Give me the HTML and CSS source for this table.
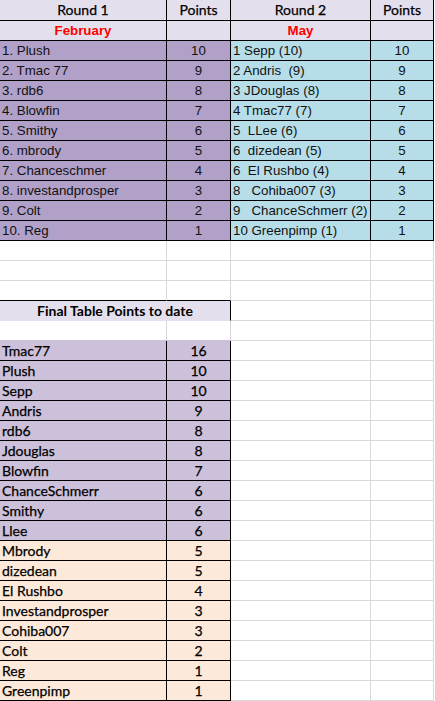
FILE: index.html
```html
<!DOCTYPE html>
<html>
<head>
<meta charset="utf-8">
<link rel="stylesheet" href="styles.css">
</head>
<body>
<div class="sheet">
  <!-- row 1 -->
  <div class="c hd k cal ctr">Round 1</div>
  <div class="c hd k cal ctr">Points</div>
  <div class="c hd k cal ctr">Round 2</div>
  <div class="c hd k cal ctr">Points</div>
  <div class="c edge"></div>
  <!-- row 2 -->
  <div class="c hd k ar red ctr">February</div>
  <div class="c hd k"></div>
  <div class="c hd k ar red ctr">May</div>
  <div class="c hd k"></div>
  <div class="c edge"></div>
  <!-- rows 3-12 -->
  <div class="c p1 k ar">1. Plush</div><div class="c p1 k ar ctr">10</div><div class="c bl k ar">1 Sepp (10)</div><div class="c bl k ar ctr">10</div><div class="c edge"></div>
  <div class="c p1 k ar">2. Tmac 77</div><div class="c p1 k ar ctr">9</div><div class="c bl k ar">2 Andris  (9)</div><div class="c bl k ar ctr">9</div><div class="c edge"></div>
  <div class="c p1 k ar">3. rdb6</div><div class="c p1 k ar ctr">8</div><div class="c bl k ar">3 JDouglas (8)</div><div class="c bl k ar ctr">8</div><div class="c edge"></div>
  <div class="c p1 k ar">4. Blowfin</div><div class="c p1 k ar ctr">7</div><div class="c bl k ar">4 Tmac77 (7)</div><div class="c bl k ar ctr">7</div><div class="c edge"></div>
  <div class="c p1 k ar">5. Smithy</div><div class="c p1 k ar ctr">6</div><div class="c bl k ar">5  LLee (6)</div><div class="c bl k ar ctr">6</div><div class="c edge"></div>
  <div class="c p1 k ar">6. mbrody</div><div class="c p1 k ar ctr">5</div><div class="c bl k ar">6  dizedean (5)</div><div class="c bl k ar ctr">5</div><div class="c edge"></div>
  <div class="c p1 k ar">7. Chanceschmer</div><div class="c p1 k ar ctr">4</div><div class="c bl k ar">6  El Rushbo (4)</div><div class="c bl k ar ctr">4</div><div class="c edge"></div>
  <div class="c p1 k ar">8. investandprosper</div><div class="c p1 k ar ctr">3</div><div class="c bl k ar">8   Cohiba007 (3)</div><div class="c bl k ar ctr">3</div><div class="c edge"></div>
  <div class="c p1 k ar">9. Colt</div><div class="c p1 k ar ctr">2</div><div class="c bl k ar">9   ChanceSchmerr (2)</div><div class="c bl k ar ctr">2</div><div class="c edge"></div>
  <div class="c p1 k ar">10. Reg</div><div class="c p1 k ar ctr">1</div><div class="c bl k ar">10 Greenpimp (1)</div><div class="c bl k ar ctr">1</div><div class="c edge"></div>
  <!-- rows 13-15 -->
  <div class="c"></div><div class="c"></div><div class="c"></div><div class="c"></div><div class="c edge"></div>
  <div class="c"></div><div class="c"></div><div class="c"></div><div class="c"></div><div class="c edge"></div>
  <div class="c kb"></div><div class="c kb"></div><div class="c"></div><div class="c"></div><div class="c edge"></div>
  <!-- row 16 -->
  <div class="c hd kr hb span2 cal bold ctr">Final Table Points to date</div><div class="c"></div><div class="c"></div><div class="c edge"></div>
  <!-- row 17 -->
  <div class="c pb"></div><div class="c pb"></div><div class="c"></div><div class="c"></div><div class="c edge"></div>
  <!-- final rows -->
  <div class="c fp k cal">Tmac77</div><div class="c fp k cal ctr">16</div><div class="c"></div><div class="c"></div><div class="c edge"></div>
  <div class="c fp k cal">Plush</div><div class="c fp k cal ctr">10</div><div class="c"></div><div class="c"></div><div class="c edge"></div>
  <div class="c fp k cal">Sepp</div><div class="c fp k cal ctr">10</div><div class="c"></div><div class="c"></div><div class="c edge"></div>
  <div class="c fp k cal">Andris</div><div class="c fp k cal ctr">9</div><div class="c"></div><div class="c"></div><div class="c edge"></div>
  <div class="c fp k cal">rdb6</div><div class="c fp k cal ctr">8</div><div class="c"></div><div class="c"></div><div class="c edge"></div>
  <div class="c fp k cal">Jdouglas</div><div class="c fp k cal ctr">8</div><div class="c"></div><div class="c"></div><div class="c edge"></div>
  <div class="c fp k cal">Blowfin</div><div class="c fp k cal ctr">7</div><div class="c"></div><div class="c"></div><div class="c edge"></div>
  <div class="c fp k cal">ChanceSchmerr</div><div class="c fp k cal ctr">6</div><div class="c"></div><div class="c"></div><div class="c edge"></div>
  <div class="c fp k cal">Smithy</div><div class="c fp k cal ctr">6</div><div class="c"></div><div class="c"></div><div class="c edge"></div>
  <div class="c fp k cal">Llee</div><div class="c fp k cal ctr">6</div><div class="c"></div><div class="c"></div><div class="c edge"></div>
  <div class="c pe k cal">Mbrody</div><div class="c pe k cal ctr">5</div><div class="c"></div><div class="c"></div><div class="c edge"></div>
  <div class="c pe k cal">dizedean</div><div class="c pe k cal ctr">5</div><div class="c"></div><div class="c"></div><div class="c edge"></div>
  <div class="c pe k cal">El Rushbo</div><div class="c pe k cal ctr">4</div><div class="c"></div><div class="c"></div><div class="c edge"></div>
  <div class="c pe k cal">Investandprosper</div><div class="c pe k cal ctr">3</div><div class="c"></div><div class="c"></div><div class="c edge"></div>
  <div class="c pe k cal">Cohiba007</div><div class="c pe k cal ctr">3</div><div class="c"></div><div class="c"></div><div class="c edge"></div>
  <div class="c pe k cal">Colt</div><div class="c pe k cal ctr">2</div><div class="c"></div><div class="c"></div><div class="c edge"></div>
  <div class="c pe k cal">Reg</div><div class="c pe k cal ctr">1</div><div class="c"></div><div class="c"></div><div class="c edge"></div>
  <div class="c pe k cal">Greenpimp</div><div class="c pe k cal ctr">1</div><div class="c"></div><div class="c"></div><div class="c edge"></div>
</div>
</body>
</html>
```

FILE: styles.css
```css
html, body {
  margin: 0;
  padding: 0;
  background: #ffffff;
}

.sheet {
  display: grid;
  grid-template-columns: 167px 64px 140px 63px 1px;
  grid-template-rows: 21px;
  grid-auto-rows: 20px;
  width: 435px;
}

.c {
  box-sizing: border-box;
  border-right: 1px solid #d9d9d9;
  border-bottom: 1px solid #d9d9d9;
  padding-left: 2px;
  white-space: pre;
  overflow: hidden;
  line-height: 19px;
  color: #000;
}

.sheet > .c:nth-child(-n+5) {
  line-height: 20px;
}

.edge {
  border: none;
  padding: 0;
}

/* fills */
.hd { background: #e4dfec; }
.p1 { background: #b1a0c7; }
.bl { background: #b7dee8; }
.fp { background: #ccc0da; }
.pe { background: #fde9d9; }

/* borders */
.k { border-right-color: #000; border-bottom-color: #000; }
.kb { border-bottom-color: #000; }
.kr { border-right-color: #000; }
.hb { border-bottom-color: #e4dfec; }
.pb { border-bottom-color: #ccc0da; }

.span2 { grid-column: span 2; }

/* text */
.ar {
  font-family: "Liberation Sans", Arial, sans-serif;
  font-size: 13.3px;
  color: #111;
}
.cal {
  font-family: Lato, "Open Sans", sans-serif;
  font-size: 14px;
  -webkit-text-stroke: 0.25px #000;
}
.bold { font-weight: bold; -webkit-text-stroke: 0; }
.red { color: #ff0000; font-weight: bold; }
.ctr { text-align: center; padding-left: 0; }
```
